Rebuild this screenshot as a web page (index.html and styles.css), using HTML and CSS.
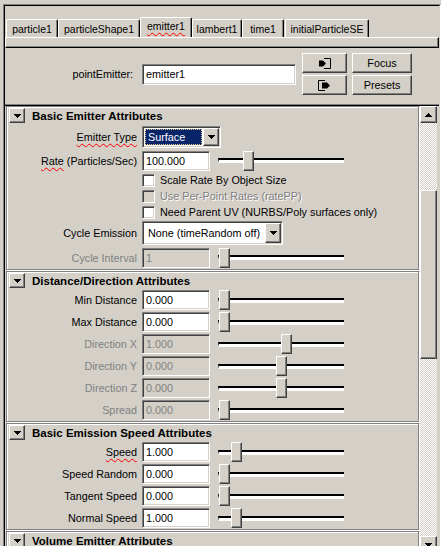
FILE: index.html
```html
<!DOCTYPE html>
<html>
<head>
<meta charset="utf-8">
<link rel="stylesheet" href="styles.css">
</head>
<body>
<div class="frame">
 <div class="frame-inner">
  <div class="tabs">
   <div class="tab w-particle">particle1</div>
   <div class="tab w-shape">particleShape1</div>
   <div class="tab sel w-emitter"><span class="spell">emitter1</span></div>
   <div class="tab w-lambert">lambert1</div>
   <div class="tab w-time">time1</div>
   <div class="tab w-ise">initialParticleSE</div>
  </div>
  <div class="tabpanel"></div>
  <div class="nodebar">
   <div class="nodelabel">pointEmitter:</div>
   <div class="field nodefield">emitter1</div>
   <div class="btngrid">
    <div class="btn raised"><svg width="14" height="11" viewBox="0 0 14 11"><path d="M6 0.5H12.5V10.5H6" fill="none" stroke="#000" stroke-width="1"/><path d="M1 2.5H5L8 5.5L5 8.5H1Z" fill="#000"/></svg></div>
    <div class="btn raised">Focus</div>
    <div class="btn raised"><svg width="14" height="11" viewBox="0 0 14 11"><path d="M7 0.5H0.5V10.5H7" fill="none" stroke="#000" stroke-width="1"/><path d="M4 2.5H9L12 5.5L9 8.5H4Z" fill="#000"/></svg></div>
    <div class="btn raised">Presets</div>
   </div>
  </div>
  <div class="scrollarea">
   <div class="sections">
    <div class="section">
     <div class="shead"><div class="collapse raised"><svg class="arrow" width="7" height="4" viewBox="0 0 7 4"><path d="M0 0h7v1h-1v1h-1v1h-1v1h-1v-1h-1v-1h-1v-1h-1z" fill="#000"/></svg></div><span class="stitle">Basic Emitter Attributes</span></div>
     <div class="row r-type">
      <div class="label"><span class="spell">Emitter Type</span></div>
      <div class="optmenu sunken">
       <div class="optsel">Surface</div>
       <div class="optbtn raised"><svg width="7" height="4" viewBox="0 0 7 4"><path d="M0 0h7v1h-1v1h-1v1h-1v1h-1v-1h-1v-1h-1v-1h-1z" fill="#000"/></svg></div>
      </div>
     </div>
     <div class="row r-rate">
      <div class="label"><span class="spell">Rate</span> (Particles/Sec)</div>
      <div class="field">100.000</div>
      <div class="slider"><div class="track"></div><div class="thumb raised" style="left:25px"></div></div>
     </div>
     <div class="cbrow"><div class="cb sunken"></div><span>Scale Rate By Object Size</span></div>
     <div class="cbrow"><div class="cb sunken dis"></div><span class="distext">Use Per-Point Rates (ratePP)</span></div>
     <div class="cbrow"><div class="cb sunken"></div><span>Need Parent UV (NURBS/Poly surfaces only)</span></div>
     <div class="row r-cycle">
      <div class="label">Cycle Emission</div>
      <div class="cyclemenu sunken">
       <div class="cycletext">None (timeRandom off)</div>
       <div class="optbtn raised"><svg width="7" height="4" viewBox="0 0 7 4"><path d="M0 0h7v1h-1v1h-1v1h-1v1h-1v-1h-1v-1h-1v-1h-1z" fill="#000"/></svg></div>
      </div>
     </div>
     <div class="row r-interval">
      <div class="label dis">Cycle Interval</div>
      <div class="field dis">1</div>
      <div class="slider"><div class="track"></div><div class="thumb raised" style="left:1px"></div></div>
     </div>
    </div>

    <div class="section">
     <div class="shead"><div class="collapse raised"><svg width="7" height="4" viewBox="0 0 7 4"><path d="M0 0h7v1h-1v1h-1v1h-1v1h-1v-1h-1v-1h-1v-1h-1z" fill="#000"/></svg></div><span class="stitle">Distance/Direction Attributes</span></div>
     <div class="row"><div class="label">Min Distance</div><div class="field">0.000</div><div class="slider"><div class="track"></div><div class="thumb raised" style="left:1px"></div></div></div>
     <div class="row"><div class="label">Max Distance</div><div class="field">0.000</div><div class="slider"><div class="track"></div><div class="thumb raised" style="left:1px"></div></div></div>
     <div class="row"><div class="label dis">Direction X</div><div class="field dis">1.000</div><div class="slider"><div class="track"></div><div class="thumb raised" style="left:63px"></div></div></div>
     <div class="row"><div class="label dis">Direction Y</div><div class="field dis">0.000</div><div class="slider"><div class="track"></div><div class="thumb raised" style="left:58px"></div></div></div>
     <div class="row"><div class="label dis">Direction Z</div><div class="field dis">0.000</div><div class="slider"><div class="track"></div><div class="thumb raised" style="left:58px"></div></div></div>
     <div class="row"><div class="label dis">Spread</div><div class="field dis">0.000</div><div class="slider"><div class="track"></div><div class="thumb raised" style="left:1px"></div></div></div>
    </div>

    <div class="section">
     <div class="shead"><div class="collapse raised"><svg width="7" height="4" viewBox="0 0 7 4"><path d="M0 0h7v1h-1v1h-1v1h-1v1h-1v-1h-1v-1h-1v-1h-1z" fill="#000"/></svg></div><span class="stitle">Basic Emission Speed Attributes</span></div>
     <div class="row"><div class="label"><span class="spell">Speed</span></div><div class="field">1.000</div><div class="slider"><div class="track"></div><div class="thumb raised" style="left:13px"></div></div></div>
     <div class="row"><div class="label">Speed Random</div><div class="field">0.000</div><div class="slider"><div class="track"></div><div class="thumb raised" style="left:1px"></div></div></div>
     <div class="row"><div class="label">Tangent Speed</div><div class="field">0.000</div><div class="slider"><div class="track"></div><div class="thumb raised" style="left:1px"></div></div></div>
     <div class="row"><div class="label">Normal Speed</div><div class="field">1.000</div><div class="slider"><div class="track"></div><div class="thumb raised" style="left:13px"></div></div></div>
    </div>

    <div class="section last">
     <div class="shead"><div class="collapse raised"><svg width="7" height="4" viewBox="0 0 7 4"><path d="M0 0h7v1h-1v1h-1v1h-1v1h-1v-1h-1v-1h-1v-1h-1z" fill="#000"/></svg></div><span class="stitle">Volume Emitter Attributes</span></div>
    </div>
   </div>
   <div class="vscroll">
    <div class="sbtn raised"><svg width="7" height="4" viewBox="0 0 7 4"><path d="M0 4h7v-1h-1v-1h-1v-1h-1v-1h-1v1h-1v1h-1v1h-1z" fill="#000"/></svg></div>
    <div class="strack">
     <div class="sgap"></div>
     <div class="sthumb raised"></div>
    </div>
    <div class="sbtn raised"><svg width="7" height="4" viewBox="0 0 7 4"><path d="M0 0h7v1h-1v1h-1v1h-1v1h-1v-1h-1v-1h-1v-1h-1z" fill="#000"/></svg></div>
   </div>
  </div>
 </div>
</div>
</body>
</html>
```
FILE: styles.css
```css
* { box-sizing: border-box; }
html, body { margin: 0; padding: 0; }
body {
  width: 441px;
  height: 546px;
  overflow: hidden;
  background: #d4d0c8;
  font-family: "Liberation Sans", Arial, sans-serif;
  font-size: 10.8px;
  color: #000;
}

.raised {
  background: #d4d0c8;
  border: 1px solid;
  border-color: #fff #404040 #404040 #fff;
  box-shadow: inset -1px -1px #808080;
}
.sunken {
  border: 1px solid;
  border-color: #808080 #fff #fff #808080;
  box-shadow: inset 1px 1px #404040, inset -1px -1px #d4d0c8;
}

.frame {
  margin: 4px 0 0 3px;
  width: 438px;
  height: 549px;
  border-top: 1px solid #808080;
  border-left: 1px solid #808080;
  border-right: 1px solid #fff;
}
.frame-inner {
  height: 100%;
  display: flex;
  flex-direction: column;
  border-top: 1px solid #000;
  border-left: 1px solid #000;
  border-right: 1px solid #d4d0c8;
}

/* tabs */
.tabs {
  flex: none;
  display: flex;
  align-items: flex-end;
  height: 31px;
  padding: 11px 0 0 1px;
}
.tab {
  height: 18px;
  display: flex;
  align-items: center;
  justify-content: center;
  padding-top: 1px;
  font-size: 10.5px;
  white-space: nowrap;
  border-top: 1px solid #fff;
  border-left: 1px solid #fff;
  border-right: 1px solid #000;
  border-radius: 2px 2px 0 0;
  box-shadow: inset -1px 0 #808080;
}
.tab.sel { height: 20px; padding-top: 0; padding-bottom: 3px; }
.w-particle { width: 52px; }
.w-shape { width: 82px; }
.w-emitter { width: 52px; }
.w-lambert { width: 50px; }
.w-time { width: 42px; margin-right: 1px; }
.w-ise { width: 84px; }

.tabpanel {
  flex: none;
  height: 11px;
  border-top: 1px solid #fff;
  border-left: 1px solid #fff;
  border-right: 1px solid #000;
  border-bottom: 1px solid #000;
  box-shadow: inset -1px -1px #808080;
}

.spell {
  text-decoration: underline wavy #ff0000;
  text-decoration-thickness: 1px;
  text-underline-offset: 2px;
  text-decoration-skip-ink: none;
}

/* node bar */
.nodebar {
  flex: none;
  height: 56px;
  padding: 5px 0 9px 0;
  display: flex;
  align-items: center;
}
.nodelabel {
  width: 128px;
  margin-right: 9px;
  text-align: right;
}
.field {
  height: 20px;
  background: #fff;
  border: 1px solid;
  border-color: #808080 #fff #fff #808080;
  box-shadow: inset 1px 1px #404040, inset -1px -1px #d4d0c8;
  padding: 0 0 0 3px;
  display: flex;
  align-items: center;
  white-space: nowrap;
}
.nodefield { width: 154px; height: 21px; margin-right: 6px; }
.btngrid {
  display: grid;
  grid-template-columns: 45px 60px;
  grid-template-rows: 20px 20px;
  gap: 2px 5px;
}
.btn {
  display: flex;
  align-items: center;
  justify-content: center;
}

/* scroll area */
.scrollarea {
  flex: 1;
  min-height: 0;
  display: flex;
  border-top: 1px solid #808080;
  padding-top: 1px;
  box-shadow: inset 0 1px #000;
}
.sections {
  flex: none;
  width: 415px;
  padding-left: 1px;
}
.section {
  width: 413px;
  margin-bottom: 1px;
  border: 1px solid #808080;
  box-shadow: inset 1px 1px #fff, 1px 1px #fff;
}
.section.last { height: 40px; }
.shead {
  height: 17px;
  display: flex;
  align-items: center;
  padding-left: 2px;
  gap: 7px;
}
.collapse {
  width: 16px;
  height: 15px;
  display: flex;
  align-items: center;
  justify-content: center;
}
.stitle {
  font-weight: bold;
  font-size: 11.5px;
  white-space: nowrap;
}

.row {
  display: flex;
  align-items: center;
  height: 22px;
}
.r-type { height: 25px; }
.r-rate { height: 23px; }
.r-cycle { height: 26px; }
.r-interval { height: 23px; }
.label {
  width: 130px;
  margin-right: 5px;
  text-align: right;
  white-space: nowrap;
}
.row .field { width: 68px; }
.dis { color: #808080; }
.field.dis { background: #d4d0c8; color: #808080; }

.slider {
  position: relative;
  width: 126px;
  height: 20px;
  margin-left: 8px;
  display: flex;
  align-items: center;
}
.track {
  width: 126px;
  height: 5px;
  border-top: 2px solid #000;
  border-bottom: 3px solid #fff;
  border-left: 1px solid #404040;
}
.thumb {
  position: absolute;
  top: 0;
  width: 11px;
  height: 20px;
}

.cbrow {
  display: flex;
  align-items: center;
  height: 16px;
  padding-left: 135px;
  white-space: nowrap;
}
.cb {
  width: 13px;
  height: 13px;
  background: #fff;
  margin-right: 5px;
  flex: none;
}
.cb.dis { background: #d4d0c8; }
.distext { color: #808080; text-shadow: 1px 1px 0 #fff; }

.optmenu {
  width: 79px;
  height: 22px;
  background: #fff;
  padding: 1px;
  display: flex;
}
.optsel {
  flex: 1;
  margin: 1px 1px 1px 1px;
  background: #0a246a;
  color: #fff;
  outline: 1px dotted #e0d08a;
  outline-offset: -1px;
  padding-left: 3px;
  display: flex;
  align-items: center;
}
.optbtn {
  width: 16px;
  flex: none;
  display: flex;
  align-items: center;
  justify-content: center;
}
.cyclemenu {
  width: 141px;
  height: 24px;
  background: #fff;
  padding: 1px;
  display: flex;
}
.cycletext {
  flex: 1;
  padding-left: 4px;
  display: flex;
  align-items: center;
  white-space: nowrap;
}

/* scrollbar */
.vscroll {
  flex: none;
  width: 17px;
  display: flex;
  flex-direction: column;
}
.sbtn {
  flex: none;
  height: 17px;
  display: flex;
  align-items: center;
  justify-content: center;
}
.strack {
  flex: 1;
  display: flex;
  flex-direction: column;
  background: repeating-conic-gradient(#fff 0 25%, #d4d0c8 0 50%) 0 0 / 2px 2px;
}
.sgap { flex: none; height: 67px; }
.sthumb { flex: none; height: 169px; }
```
